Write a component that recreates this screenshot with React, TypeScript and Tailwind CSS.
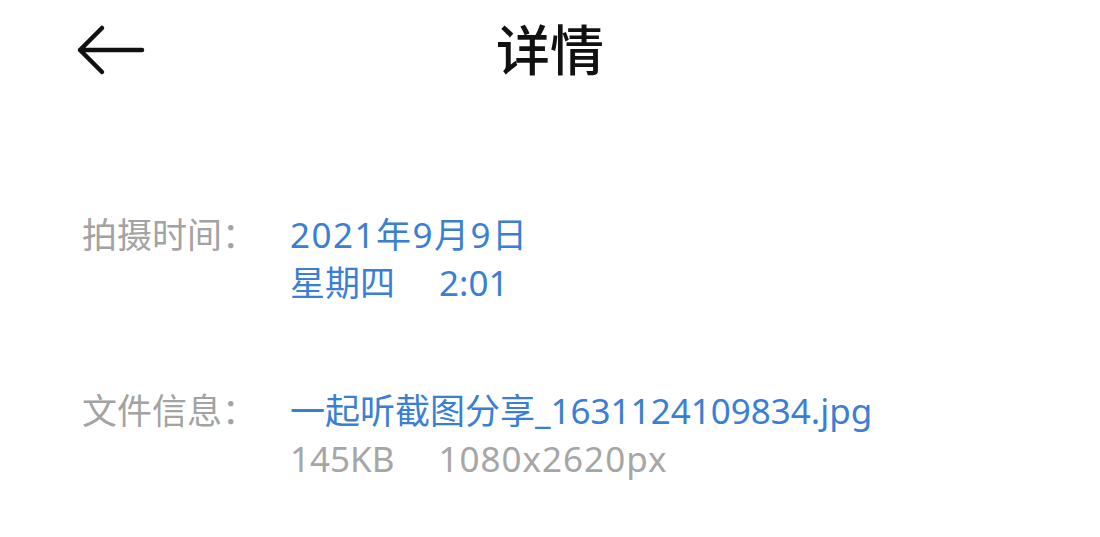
import React from 'react';

const font = { fontFamily: '"Noto Sans", "Noto Sans CJK SC", sans-serif' };

function BackArrow() {
  return (
    <svg width="70" height="52" viewBox="0 0 70 52" fill="none" aria-hidden="true">
      <path
        d="M4 26 H66 M4 26 L26 4 M4 26 L26 48"
        stroke="#111"
        strokeWidth="4.5"
        strokeLinecap="round"
        strokeLinejoin="round"
      />
    </svg>
  );
}

export default function App() {
  return (
    <div className="h-[537px] w-[1100px] overflow-hidden bg-white" style={font}>
      <header className="grid h-[100px] grid-cols-[1fr_auto_1fr] items-center px-[76px]">
        <button type="button" className="justify-self-start" aria-label="返回">
          <BackArrow />
        </button>
        <h1 className="text-[54px] font-medium leading-none text-[#111]">详情</h1>
        <div />
      </header>

      <main className="pl-[82px] pt-[111px] text-[35px] leading-[48px]">
        <div className="flex">
          <span className="w-[208px] shrink-0 text-[#a3a3a3]">拍摄时间：</span>
          <div className="text-[#3a7fd3]">
            <div className="tracking-[1.5px]">2021年9月9日</div>
            <div>
              星期四<span className="ml-[44px]">2:01</span>
            </div>
          </div>
        </div>

        <div className="mt-[80px] flex">
          <span className="w-[208px] shrink-0 text-[#a3a3a3]">文件信息：</span>
          <div>
            <div className="text-[#3a7fd3]">一起听截图分享_1631124109834.jpg</div>
            <div className="text-[#a6a6a6]">
              145KB<span className="ml-[44px] tracking-[1px]">1080x2620px</span>
            </div>
          </div>
        </div>
      </main>
    </div>
  );
}
